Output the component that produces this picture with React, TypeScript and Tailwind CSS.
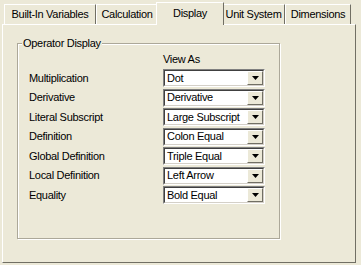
import React from "react";

const rows: [string, string][] = [
  ["Multiplication", "Dot"],
  ["Derivative", "Derivative"],
  ["Literal Subscript", "Large Subscript"],
  ["Definition", "Colon Equal"],
  ["Global Definition", "Triple Equal"],
  ["Local Definition", "Left Arrow"],
  ["Equality", "Bold Equal"],
];

function Combo({ value }: { value: string }) {
  return (
    <div className="w-[102px] h-[18px] border-t border-l border-[#808080] border-b border-r border-b-white border-r-white">
      <div className="h-full flex items-center bg-white border-t border-l border-[#404040] border-b border-r border-b-[#D4D0C8] border-r-[#D4D0C8]">
        <div className="flex-1 pl-[2px] leading-none truncate">{value}</div>
        <div className="w-[16px] h-full flex items-center justify-center bg-[#ECE9D8] border-t border-l border-white border-b border-r border-b-[#716F64] border-r-[#716F64]">
          <svg width="7" height="4" viewBox="0 0 7 4">
            <polygon points="0,0 7,0 3.5,4" fill="#000" />
          </svg>
        </div>
      </div>
    </div>
  );
}

function Tab({ label, w, selected }: { label: string; w: string; selected?: boolean }) {
  if (selected) {
    return (
      <div
        className={`${w} h-[23px] -mx-[2px] -mb-[1px] relative z-10 bg-[#ECE9D8] border-t border-l border-white border-r border-r-[#716F64] flex items-center justify-center pb-[2px]`}
      >
        {label}
      </div>
    );
  }
  return (
    <div
      className={`${w} h-[20px] bg-[#ECE9D8] border-t border-l border-white border-r border-r-[#716F64] flex items-center justify-center`}
    >
      {label}
    </div>
  );
}

export default function App() {
  return (
    <div className="w-[361px] h-[265px] bg-[#ECE9D8] text-black text-[11px] tracking-[-0.3px] font-['Liberation_Sans',Arial,sans-serif] pt-[2px]">
      <div className="flex items-end h-[22px] pl-[4px]">
        <Tab label="Built-In Variables" w="w-[92px]" />
        <Tab label="Calculation" w="w-[62px]" />
        <Tab label="Display" w="w-[68px]" selected />
        <Tab label="Unit System" w="w-[63px]" />
        <Tab label="Dimensions" w="w-[66px]" />
      </div>
      <div className="ml-[2px] w-[354px] h-[239px] border-t border-l border-white border-r border-b border-r-[#716F64] border-b-[#716F64] pt-[12px] pl-[14px]">
        <fieldset className="w-[262px] h-[202px] border border-[#ACA899] shadow-[1px_1px_0_#fff,inset_1px_1px_0_#fff] px-0">
          <legend className="ml-[4px] px-[1px] bg-[#ECE9D8] leading-[13px]">Operator Display</legend>
          <div className="flex flex-col pl-[11px] pr-[14px]">
            <div className="h-[16px] pl-[134px] leading-[13px] mt-[3px]">View As</div>
            <div className="flex flex-col gap-[1.5px]">
              {rows.map(([label, value]) => (
                <div key={label} className="flex items-center h-[18px]">
                  <div className="w-[134px] leading-none">{label}</div>
                  <Combo value={value} />
                </div>
              ))}
            </div>
          </div>
        </fieldset>
      </div>
    </div>
  );
}
